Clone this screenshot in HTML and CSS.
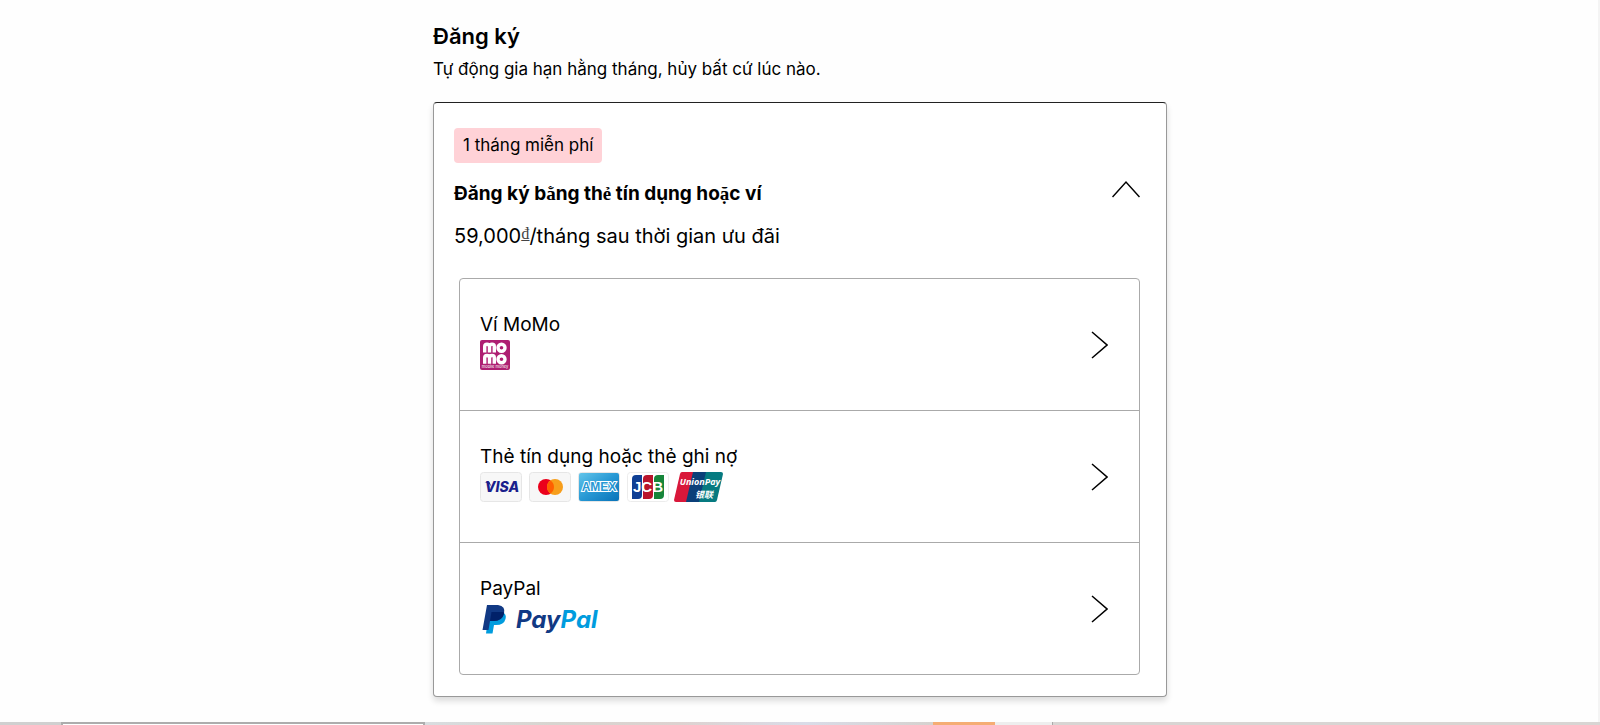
FILE: index.html
```html
<!DOCTYPE html>
<html lang="vi">

<head>
  <meta charset="utf-8">
  <title>Đăng ký</title>
  <link rel="stylesheet" href="styles.css">
</head>

<body>
  <main class="checkout">
    <h1 class="page-title">Đăng ký</h1>
    <p class="page-note">Tự động gia hạn hằng tháng, hủy bất cứ lúc nào.</p>

    <section class="plan">
      <button class="plan-header" aria-expanded="true">
        <span class="plan-info">
          <span class="badge">1 tháng miễn phí</span>
          <span class="plan-name">Đăng ký b<span class="serif">ằ</span>ng th<span class="serif">ẻ</span> tín dụng ho<span class="serif">ặ</span>c ví</span>
          <span class="plan-price">59,000<span class="serif currency">₫</span>/tháng sau thời gian ưu đãi</span>
        </span>
        <svg class="chevron-up" width="28" height="18" viewBox="0 0 28 18">
          <path d="M0.500 17 14 2 27.500 17" />
        </svg>
      </button>

      <div class="methods">
        <button class="method">
          <span class="method-info">
            <span class="method-name">Ví MoMo</span>
            <span class="logos">
              <svg width="30" height="30" viewBox="0 0 30 30">
                <rect width="30" height="30" rx="2" fill="#ae1f72" />
                <g fill="none" stroke="#fff" stroke-width="3.400">
                  <path d="M4.700 12.500V6.500Q4.700 4.200 7 4.200T9.500 6.500V12.500M9.500 6.500Q9.500 4.200 12 4.200T14.300 6.500V12.500" />
                  <circle cx="21.500" cy="7.700" r="3.500" />
                  <path d="M4.700 23.800V17.800Q4.700 15.500 7 15.500T9.500 17.800V23.800M9.500 17.800Q9.500 15.500 12 15.500T14.300 17.800V23.800" />
                  <circle cx="21.500" cy="19.300" r="3.500" />
                </g>
                <text class="momo-sub" x="15" y="28" text-anchor="middle">mobile money</text>
              </svg>
            </span>
          </span>
          <svg class="chevron-right" width="17" height="28" viewBox="0 0 17 28">
            <path d="M1 1 16 14 1 27" />
          </svg>
        </button>

        <button class="method">
          <span class="method-info">
            <span class="method-name">Thẻ tín dụng hoặc thẻ ghi nợ</span>
            <span class="logos">
              <svg width="42" height="30" viewBox="0 0 42 30">
                <rect class="card-face" x="0.500" y="0.500" width="41" height="29" rx="3" />
                <text class="visa" x="22" y="20" text-anchor="middle">VISA</text>
                <path d="M4.500 10h5l2 5q-2-4-7-5z" fill="#1a1f8c" />
              </svg>
              <svg width="42" height="30" viewBox="0 0 42 30">
                <rect class="card-face" x="0.500" y="0.500" width="41" height="29" rx="3" />
                <circle cx="17" cy="15" r="8" fill="#eb001b" />
                <circle cx="26" cy="15" r="8" fill="#f79e1b" />
                <path d="M21.500 8.400a8 8 0 0 1 0 13.200a8 8 0 0 1 0-13.200z" fill="#ff5f00" />
              </svg>
              <svg width="42" height="30" viewBox="0 0 42 30">
                <defs>
                  <linearGradient id="amex" x1="0" y1="0" x2="1" y2="1">
                    <stop offset="0" stop-color="#63c5ea" />
                    <stop offset="0.500" stop-color="#2798d4" />
                    <stop offset="1" stop-color="#0872b8" />
                  </linearGradient>
                </defs>
                <rect class="card-face" x="0.500" y="0.500" width="41" height="29" rx="3" />
                <rect x="1" y="1" width="40" height="28" rx="2" fill="url(#amex)" />
                <text class="amex" x="21" y="19" text-anchor="middle">AMEX</text>
              </svg>
              <svg width="42" height="30" viewBox="0 0 42 30">
                <rect x="0.500" y="0.500" width="41" height="29" rx="3" fill="#fff" stroke="#ececec" />
                <path d="M9 3h6v20q0 4-4 4H5V7q0-4 4-4z" fill="#0f3f94" />
                <path d="M20 3h6v20q0 4-4 4h-6V7q0-4 4-4z" fill="#b8142c" />
                <path d="M31 3h6v20q0 4-4 4h-6V7q0-4 4-4z" fill="#16853a" />
                <text class="jcb" x="21" y="20" text-anchor="middle">JCB</text>
              </svg>
              <svg class="unionpay" width="49" height="30" viewBox="0 0 49 30">
                <path d="M8 0H22L15 30H2Q0 30 0 28L6 2Q6.500 0 8 0z" fill="#d9183a" />
                <path d="M19 0H37L30 30H12z" fill="#0b4079" />
                <path d="M32 0H47Q49 0 49 2L43 28Q42.500 30 41 30H25z" fill="#067a80" />
                <text class="union-name" x="26" y="13" text-anchor="middle">UnionPay</text>
                <text class="union-sub" x="30" y="26" text-anchor="middle">银联</text>
              </svg>
            </span>
          </span>
          <svg class="chevron-right" width="17" height="28" viewBox="0 0 17 28">
            <path d="M1 1 16 14 1 27" />
          </svg>
        </button>

        <button class="method">
          <span class="method-info">
            <span class="method-name">PayPal</span>
            <span class="logos">
              <svg width="122" height="30" viewBox="0 0 122 30">
                <path d="M9 8H22Q27 10 25.500 15Q24 21 16 21H14L12.500 29.500H6z" fill="#009cde" />
                <path d="M7 1H18Q26 2 24 10Q22 17 14 17H10L8.500 26H2.500z" fill="#113984" />
                <path d="M11.500 8H22Q24 8 24.200 9Q22 17 14 17H10z" fill="#012169" />
                <text class="paypal" x="36" y="24"><tspan fill="#113984">Pay</tspan><tspan fill="#009cde">Pal</tspan></text>
              </svg>
            </span>
          </span>
          <svg class="chevron-right" width="17" height="28" viewBox="0 0 17 28">
            <path d="M1 1 16 14 1 27" />
          </svg>
        </button>
      </div>
    </section>
  </main>

  <footer class="strip">
    <div class="strip-start"></div>
    <div class="strip-search"></div>
    <div class="strip-middle"></div>
    <div class="strip-active"></div>
    <div class="strip-light"></div>
    <div class="strip-end"></div>
  </footer>
</body>

</html>
```

FILE: styles.css
```css
* {
  box-sizing: border-box;
}

body {
  margin: 0;
  min-height: 100vh;
  display: flex;
  flex-direction: column;
  font-family: Inter, "Noto Sans", sans-serif;
  color: black;
  background-color: #fefefe;
}

.checkout {
  flex: 1;
  width: 100%;
  padding: 22px 0 20px;
  box-shadow: inset -2px 0 #f4f4f4;
}

.page-title,
.page-note,
.plan {
  width: 734px;
  max-width: 100%;
  margin: 0 auto;
}

.page-title {
  font-size: 22px;
  line-height: 28px;
  font-weight: 600;
}

.page-note {
  margin-top: 5px;
  font-size: 17px;
  line-height: 28px;
}

.plan {
  margin-top: 19px;
  padding: 25px 26px 21px 20px;
  border: 1px solid #999;
  border-top-color: #222;
  border-radius: 4px;
  background-color: white;
  box-shadow: 0 4px 6px rgba(0, 0, 0, 0.14);
}

button {
  width: 100%;
  padding: 0;
  border: none;
  background: none;
  font-family: inherit;
  color: inherit;
  text-align: left;
  cursor: pointer;
}

.plan-header {
  display: flex;
  align-items: center;
  justify-content: space-between;
}

.plan-info {
  display: flex;
  flex-direction: column;
  align-items: flex-start;
}

.badge {
  padding: 0 9px;
  border-radius: 4px;
  background-color: #ffd2d7;
  font-size: 17px;
  line-height: 35px;
}

.plan-name {
  margin-top: 17px;
  font-size: 19px;
  line-height: 28px;
  font-weight: 700;
}

.plan-price {
  margin-top: 14px;
  font-size: 20px;
  line-height: 28px;
}

.serif {
  font-family: "Liberation Serif", serif;
}

.currency {
  font-size: 16px;
  line-height: 24px;
  vertical-align: top;
  color: #444;
}

.methods {
  margin: 28px 0 0 5px;
  border: 1px solid #aaa;
  border-radius: 4px;
}

.method {
  display: flex;
  align-items: center;
  justify-content: space-between;
  padding: 33px 31px 32px 20px;
}

.method + .method {
  border-top: 1px solid #aaa;
}

.method-info {
  padding-bottom: 8px;
}

.method-name {
  display: block;
  margin-bottom: 2px;
  font-size: 19px;
  line-height: 26px;
}

.logos {
  display: flex;
  gap: 7px;
}

.unionpay {
  margin-left: -2px;
}

.chevron-up,
.chevron-right {
  fill: none;
  stroke: black;
  stroke-width: 1.5;
}

.card-face {
  fill: #f7f7f7;
  stroke: #e6e6e6;
}

.momo-sub {
  font-size: 4px;
  fill: white;
}

.visa {
  font: italic 800 14px Inter, sans-serif;
  fill: #1a1f8c;
}

.amex {
  font: 700 12px "Liberation Sans", sans-serif;
  fill: #2798d4;
  stroke: white;
  stroke-width: 2px;
  paint-order: stroke;
}

.jcb {
  font: 700 15px "Liberation Sans", sans-serif;
  fill: white;
}

.union-name {
  font: italic 700 9px "Open Sans", sans-serif;
  fill: white;
}

.union-sub {
  font: italic 700 9px "Noto Sans CJK SC", sans-serif;
  fill: white;
}

.paypal {
  font: italic 700 24px Inter, sans-serif;
}

.strip {
  display: flex;
  height: 3px;
  background-color: #d8d5d3;
}

.strip-start {
  width: 61px;
  background-color: #d0d0d0;
}

.strip-search {
  width: 364px;
  border: 2px solid #adadad;
  border-bottom: none;
  background-color: white;
}

.strip-middle {
  width: 508px;
  background-image: linear-gradient(to right, #d9dde0, #d8d5d0, #ddd2d0, #dadce8, #d6d2cf);
}

.strip-active {
  width: 62px;
  background-color: #f5ad74;
}

.strip-light {
  width: 58px;
  border-right: 1px solid #aaa;
  background-color: #eee;
}

.strip-end {
  flex: 1;
  background-color: #d8d5d3;
}
```
